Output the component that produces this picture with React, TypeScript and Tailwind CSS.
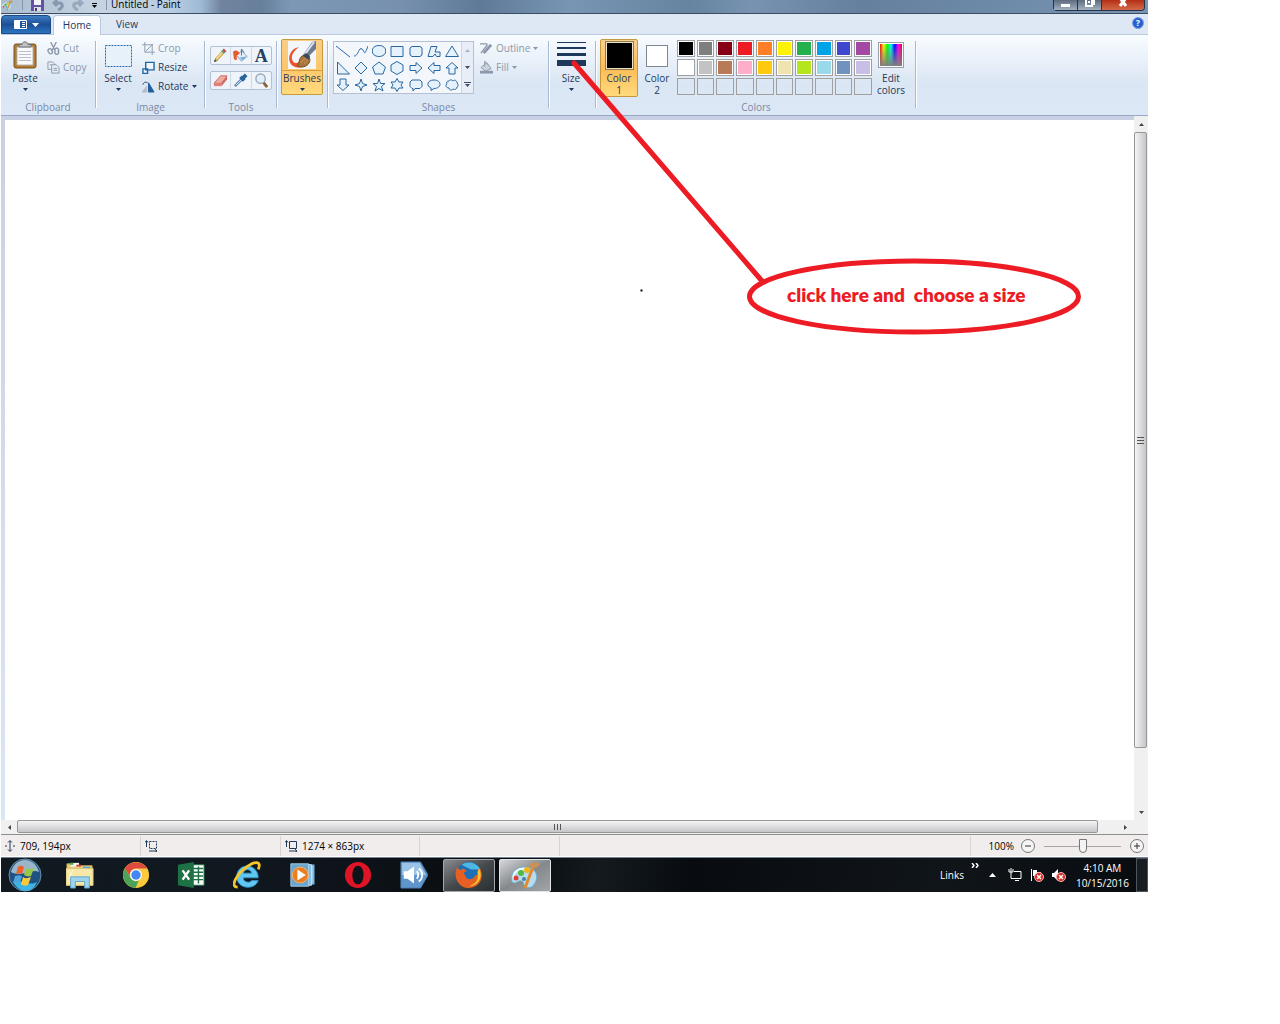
import type { ReactNode } from "react";
import { clsx } from "clsx";

const palette = [
  ["Black", "bg-black"],
  ["Gray", "bg-[#7f7f7f]"],
  ["Dark red", "bg-[#880015]"],
  ["Red", "bg-[#ed1c24]"],
  ["Orange", "bg-[#ff7f27]"],
  ["Yellow", "bg-[#fff200]"],
  ["Green", "bg-[#22b14c]"],
  ["Turquoise", "bg-[#00a2e8]"],
  ["Indigo", "bg-[#3f48cc]"],
  ["Purple", "bg-[#a349a4]"],
  ["White", "bg-white"],
  ["Light gray", "bg-[#c3c3c3]"],
  ["Brown", "bg-[#b97a57]"],
  ["Rose", "bg-[#ffaec9]"],
  ["Gold", "bg-[#ffc90e]"],
  ["Light yellow", "bg-[#efe4b0]"],
  ["Lime", "bg-[#b5e61d]"],
  ["Light turquoise", "bg-[#99d9ea]"],
  ["Blue-gray", "bg-[#7092be]"],
  ["Lavender", "bg-[#c8bfe7]"],
];

// Outlines drawn in a 14x14 box
const shapes = [
  ["Line", "M0 2 14 13"],
  ["Curve", "M0 12C4 13 5 2 8 5s2 8 6-3"],
  ["Oval", "M7 1.5c9 0 9 11 0 11S-2 1.5 7 1.5Z"],
  ["Rectangle", "M1 12.5V2.5H13V12.5Z"],
  ["Rounded rectangle", "M3 2.5H11L13 4V11L11 12.5H3L1 11V4Z"],
  ["Polygon", "M1 12.5 4 2.5H10L8 8H13V12.5H9.5L8 10 6 12.5Z"],
  ["Triangle", "M7 2 13.5 12.5H.5Z"],
  ["Right triangle", "M1.5 1V13H13.5Z"],
  ["Diamond", "M7 1 13 7 7 13 1 7Z"],
  ["Pentagon", "M7 1 13.5 6 11 13H3L.5 6Z"],
  ["Hexagon", "M7 .5 13 4V10L7 13.5 1 10V4Z"],
  ["Right arrow", "M1 4.5H7V1.5L13 7 7 12.5V9.5H1Z"],
  ["Left arrow", "M13 4.5H7V1.5L1 7 7 12.5V9.5H13Z"],
  ["Up arrow", "M4 13V7H1L7 1.5 13 7H10V13Z"],
  ["Down arrow", "M4 1V7H1L7 12.5 13 7H10V1Z"],
  ["Four-point star", "M7 1 8.5 5.5 13 7 8.5 8.5 7 13 5.5 8.5 1 7 5.5 5.5Z"],
  ["Five-point star", "M7 1 8.5 5.5H13L9.5 8.5 11 13 7 10.5 3 13 4.5 8.5 1 5.5H5.5Z"],
  ["Six-point star", "M7 .5 9 4H13L11 7 13 10H9L7 13.5 5 10H1L3 7 1 4H5Z"],
  ["Rounded callout", "M3 2H11L13 4V8.5L11 10.5H6L4 13V10.5H3L1 8.5V4Z"],
  ["Oval callout", "M7 2c8 0 8 8.5 0 8.5L4 12.5V10C-1 8 0 2 7 2Z"],
  ["Cloud callout", "M4 3c1-2 3-1 4 0 2-2 4 0 4 2 2 1 1 4 0 4 0 2-2 3-4 2-1 2-4 1-4-1-3 0-4-3-2-4-1-2 0-3 2-3Z"],
];

const statusCell = "flex items-center border-r border-[#d8d4d2] pl-1";

function DownArrow({ className }: { className?: string }) {
  return (
    <svg viewBox="0 0 5 3" className={clsx("h-[3px] w-[5px] shrink-0", className)} fill="currentColor" aria-hidden="true">
      <path d="M0 0H5L2.5 3Z" />
    </svg>
  );
}

interface GroupProps {
  label?: string;
  className: string;
  children: ReactNode;
}

function Group({ label, className, children }: GroupProps) {
  return (
    <>
      <section className={clsx("flex shrink-0 flex-col", className)} aria-label={label}>
        <div className="flex h-[62px] items-start">{children}</div>
        <div className="text-center leading-3 text-[#7b88a5]">{label}</div>
      </section>
      <span className="mt-[2px] h-[67px] w-[2px] shrink-0 border-r border-white bg-[#a9b9d1]" />
    </>
  );
}

interface RowButtonProps {
  label: string;
  icon: ReactNode;
  disabled?: boolean;
  arrow?: boolean;
}

function RowButton({ label, icon, disabled, arrow }: RowButtonProps) {
  return (
    <button
      type="button"
      disabled={disabled}
      className={clsx("flex h-[19px] items-center", disabled ? "text-[#8c98a9]" : "text-[#1e395b]")}
    >
      <svg viewBox="0 0 14 14" className="mr-[3px] size-[13px]" fill="none" stroke="currentColor" aria-hidden="true">
        {icon}
      </svg>
      {label}
      {arrow && <DownArrow className="ml-[3px]" />}
    </button>
  );
}

function PasteIcon() {
  return (
    <svg viewBox="0 0 24 28" className="h-7 w-6" aria-hidden="true">
      <rect x="1" y="3" width="22" height="24" rx="2" fill="#b27a35" stroke="#7d5220" />
      <path d="M4 6H20V24H4Z" fill="#f8fafc" stroke="#b9b2a4" />
      <path d="M6 10.5H18M6 13.5H18M6 16.5H18M6 19.5H18" stroke="#b6bfcb" />
      <path d="M6 6V3.5H9C9 0 15 0 15 3.5H18V6Z" fill="#bfc3c6" stroke="#6c7074" />
    </svg>
  );
}

function BrushIcon() {
  return (
    <svg viewBox="0 0 28 28" className="size-7" aria-hidden="true">
      <rect width="28" height="28" fill="#f3f6fa" />
      <path d="M28 0V8L19 17 15 14 24 1Z" fill="#6d7c94" />
      <path d="M26 1 17 13" stroke="#dfe6ee" strokeWidth="2" />
      <path d="M11 6C1 8-2 20 5 25c6 3 11 1 13-2l-6-3c-3 3-7 3-8-2-1-4 2-8 7-12Z" fill="#ea5429" />
      <path d="M9 25c3-1 1-7 5-10 5-2 10 2 7 7-2 4-8 5-12 3Z" fill="#a8763b" stroke="#7b4e1f" />
      <path d="M13 22C15 18 17 18 18 17M16 23C18 21 19 20 20 18" stroke="#cf9d59" fill="none" />
      <path d="M15 15 18 12 22 15 21 19Z" fill="#3f4858" />
    </svg>
  );
}

function PaletteIcon({ className }: { className: string }) {
  return (
    <svg viewBox="0 0 30 28" className={className} aria-hidden="true">
      <path d="M2 21C-1 11 8 5 16 6c10 1 13 9 9 16-3 6-9 6-11 2-1-2 0-4-3-4-3-1-5 4-9 1Z" fill="#b5dcef" stroke="#71aecd" />
      <path d="M4 18C2 11 9 7 15 8" fill="none" stroke="#f2fbff" strokeWidth="2" />
      <circle cx="6" cy="17" r="2.5" fill="#de4033" />
      <circle cx="11" cy="12" r="3" fill="#52b743" />
      <circle cx="17" cy="9" r="3" fill="#f2b51d" />
      <circle cx="14" cy="18" r="2" fill="#4381a8" />
      <path d="M15 27 23 6" stroke="#e28a2b" strokeWidth="3" />
      <path d="M20 6C19 1 24 0 30 3c-2 4-5 5-10 3Z" fill="#c89256" />
    </svg>
  );
}

function TitleBar() {
  return (
    <header className="flex h-[14px] items-start overflow-hidden border-b border-[#3c4d62] bg-[linear-gradient(to_right,#a9bdd1,#c6d4e2_100px,#b9cde2_170px,#9fbad6_200px,#71849f_220px,#667f9b_260px,#7d98b5_290px,#7690ad_400px,#5f7a98_480px,#7896b4_570px,#66839f_690px,#7793b1_750px,#64809e_860px,#7995b4)]">
      <div className="flex w-52 shrink-0 items-start">
        <PaletteIcon className="h-[11px] w-3" />
        <span className="ml-[9px] h-[10px] w-px bg-[#8797a9]" />
        <button type="button" aria-label="Save" className="ml-2">
          <svg viewBox="0 0 13 12" className="h-3 w-[13px]" aria-hidden="true">
            <path d="M0 0H13V11H0Z" fill="#6652a2" />
            <path d="M3 0H10V5H3Z" fill="#f4f5fa" />
            <path d="M3 7H10V11H3Z" fill="#dfe1e9" />
            <path d="M4 8H6V11H4Z" fill="#433a77" />
          </svg>
        </button>
        <button type="button" aria-label="Undo" disabled className="ml-2">
          <svg viewBox="0 0 12 11" className="h-[11px] w-3" fill="none" stroke="#8798af" strokeWidth="3" aria-hidden="true">
            <path d="M2 3H7C12 3 11 8 6 10M5 0 2 3 5 6" />
          </svg>
        </button>
        <button type="button" aria-label="Redo" disabled className="ml-2">
          <svg viewBox="0 0 12 11" className="h-[11px] w-3" fill="none" stroke="#98a8bd" strokeWidth="3" aria-hidden="true">
            <path d="M10 3H5C0 3 1 8 6 10M7 0 10 3 7 6" />
          </svg>
        </button>
        <button type="button" aria-label="Customize toolbar" className="mt-[3px] ml-2 flex flex-col items-center gap-px text-black">
          <span className="h-px w-[5px] bg-black" />
          <DownArrow />
        </button>
        <span className="mr-[4px] ml-[9px] h-[10px] w-px bg-[#8797a9]" />
        <h1 className="-mt-[3px] text-[10px] leading-[14px] text-black">Untitled - Paint</h1>
      </div>
      <div className="mr-[3px] ml-auto flex h-[11px] rounded-b border border-t-0 border-[#243346] text-white">
        <button type="button" aria-label="Minimize" className="flex h-[10px] w-6 items-center justify-center border-r border-[#243346] bg-linear-to-b from-[#5d6c7e] to-[#a3b1c1]">
          <span className="h-[3px] w-[9px] bg-white" />
        </button>
        <button type="button" aria-label="Restore" className="flex h-[10px] w-6 justify-center border-r border-[#243346] bg-linear-to-b from-[#5d6c7e] to-[#a3b1c1]">
          <svg viewBox="0 0 10 8" className="h-2 w-[10px]" fill="none" stroke="white" strokeWidth="2" aria-hidden="true">
            <path d="M1 0V6H7V0M9 0V5M3 2H5" />
          </svg>
        </button>
        <button type="button" aria-label="Close" className="flex h-[10px] w-[42px] justify-center rounded-br bg-linear-to-b from-[#b42d14] to-[#d4694a]">
          <svg viewBox="0 0 10 8" className="h-2 w-[10px]" fill="none" stroke="white" strokeWidth="3" aria-hidden="true">
            <path d="M2 -2 8 6M8 -2 2 6" />
          </svg>
        </button>
      </div>
    </header>
  );
}

function Tabs() {
  return (
    <nav className="flex h-[21px] items-end border-b border-[#bacbdf] bg-[#dee8f4] text-[#1e395b]" aria-label="Ribbon tabs">
      <button type="button" aria-label="Paint menu" className="flex h-[19px] w-[50px] items-center justify-center gap-[5px] rounded-t-sm border border-[#1b4b87] bg-linear-to-b from-[#3d7cc3] via-[#1d4f96] to-[#2b75c0] text-white">
        <svg viewBox="0 0 13 9" className="h-[9px] w-[13px]" fill="none" stroke="white" aria-hidden="true">
          <path d="M.5 .5H12.5V8.5H.5Z" />
          <path d="M1 1H6V8H1Z" fill="white" stroke="none" />
          <path d="M8 2.5H11M8 4.5H11M8 6.5H11" />
        </svg>
        <svg viewBox="0 0 7 4" className="h-1 w-[7px]" fill="white" aria-hidden="true">
          <path d="M0 0H7L3.5 4Z" />
        </svg>
      </button>
      <button type="button" className="-mb-px ml-[2px] h-5 w-12 rounded-t-sm border border-b-0 border-[#bacbdf] bg-[#fafcff]">
        Home
      </button>
      <button type="button" className="ml-1 h-[19px] w-11">View</button>
      <button type="button" aria-label="Help" className="mr-[4px] mb-[5px] ml-auto size-3 rounded-full border border-[#7ca0df] bg-[#2460cf] text-[9px] leading-[10px] font-bold text-white">
        ?
      </button>
    </nav>
  );
}

function ToolIcon({ name }: { name: string }) {
  return (
    <svg viewBox="0 0 16 16" className="size-[15px]" fill="none" aria-hidden="true">
      {name === "Pencil" && (
        <>
          <path d="M3 13 11 4" stroke="#b98d3c" strokeWidth="3.5" />
          <path d="M3.5 12 10.5 4.5" stroke="#f8dc83" strokeWidth="2" />
          <path d="M11 4 13 2" stroke="#c84c53" strokeWidth="4" />
          <path d="M10 5 11.5 3.5" stroke="#62a36d" strokeWidth="4" />
          <path d="M1 15 2 12 4 14Z" fill="#333" />
        </>
      )}
      {name === "Fill" && (
        <>
          <path d="M4 8 9 3 15 9 9 14Z" fill="#e6f0f8" stroke="#7c9cba" />
          <path d="M9 8V1L12 5" stroke="#51718f" />
          <path d="M0 4C4 1 6 4 7 6L4 8 4 13 1 12Z" fill="#e65b30" />
          <path d="M7 10 10 13 14 9Z" fill="#75abe0" />
        </>
      )}
      {name === "Eraser" && (
        <>
          <path d="M1 11 8 3H15L9 11Z" fill="#f0a9a1" stroke="#c8716b" />
          <path d="M1 11H9V14H1Z" fill="#e27e77" />
          <path d="M9 11 15 3V7L9 14Z" fill="#d16b65" />
        </>
      )}
      {name === "Pick color" && (
        <>
          <path d="M2 14 10 6" stroke="#5f86a9" strokeWidth="3" />
          <path d="M3 13 9 7" stroke="#dcebf6" />
          <path d="M8 4 12 8M10 6 14 2" stroke="#27659f" strokeWidth="4" />
        </>
      )}
      {name === "Magnifier" && (
        <>
          <path d="M10 10 14 15" stroke="#8b6035" strokeWidth="3" />
          <circle cx="7" cy="6" r="5" fill="#e2effa" stroke="#98a9ba" strokeWidth="1.5" />
        </>
      )}
    </svg>
  );
}

function ToolRow({ tools }: { tools: string[] }) {
  return (
    <div className="flex h-[19px] w-[62px] rounded-xs border border-[#b3c0d3] bg-[#eff4fa]">
      {tools.map((tool) => (
        <button
          key={tool}
          type="button"
          aria-label={tool}
          className="flex flex-1 items-center justify-center border-r border-[#d0dae7] last:border-r-0"
        >
          {tool === "Text" ? (
            <span className="font-['Liberation_Serif',serif] text-lg leading-4 font-bold text-[#223f64]">A</span>
          ) : (
            <ToolIcon name={tool} />
          )}
        </button>
      ))}
    </div>
  );
}

function Ribbon() {
  const tall = "flex flex-col items-center text-[#1e395b]";
  return (
    <div className="flex h-[81px] items-start overflow-hidden border-b border-[#97a9c4] bg-linear-to-b from-[#f8fcff] via-[#dbe6f4] via-60% to-[#dce8f6] pt-1">
      <Group label="Clipboard" className="w-[94px]">
        <button type="button" className={clsx(tall, "ml-[6px] w-9 pt-[2px]")}>
          <PasteIcon />
          <span className="mt-[3px] leading-3">Paste</span>
          <DownArrow className="mt-[4px]" />
        </button>
        <div className="ml-1 flex flex-col items-start">
          <RowButton label="Cut" disabled icon={<path d="M4 0 9 10M10 0 5 10M2 11a2 2 0 1 0 3-2 2 2 0 1 0-3 2M9 10a2 2 0 1 0 3 0 2 2 0 1 0-3 0" strokeWidth="1.5" />} />
          <RowButton label="Copy" disabled icon={<path d="M5 9H1V1H6L8 3V4M5 4H10L13 7V13H5ZM7 8H11M7 10H11M3 4H5" />} />
        </div>
      </Group>

      <Group label="Image" className="w-[107px]">
        <button type="button" className={clsx(tall, "ml-[3px] w-9 pt-[6px]")}>
          <svg viewBox="0 0 27 22" className="h-[22px] w-[27px]" aria-hidden="true">
            <rect x=".5" y=".5" width="26" height="21" fill="#e7f1fa" stroke="#236baa" strokeDasharray="2 1" />
          </svg>
          <span className="mt-[5px] leading-3">Select</span>
          <DownArrow className="mt-[4px]" />
        </button>
        <div className="ml-[6px] flex flex-col items-start">
          <RowButton label="Crop" disabled icon={<path d="M3 0V11H14M0 3H11V14M4 10 12 2" />} />
          <RowButton label="Resize" icon={<path d="M4 1.5H13V9.5H4ZM1 8.5H6V13.5H1Z" stroke="#1f67a4" strokeWidth="1.5" fill="#edf5fb" />} />
          <RowButton label="Rotate" arrow icon={<><path d="M7 3V13H13Z" fill="#205f9c" stroke="#205f9c" /><path d="M5 7V13H0Z" fill="#b5bdc7" stroke="#b5bdc7" /><path d="M1 5C2 2 4 2 6 3" /></>} />
        </div>
      </Group>

      <Group label="Tools" className="w-[70px]">
        <div className="ml-[4px] flex flex-col gap-[6px] pt-[7px]">
          <ToolRow tools={["Pencil", "Fill", "Text"]} />
          <ToolRow tools={["Eraser", "Pick color", "Magnifier"]} />
        </div>
      </Group>

      <Group className="w-[49px]">
        <button type="button" className={clsx(tall, "ml-[3px] h-14 w-[42px] rounded-xs border border-[#c49a3a] bg-linear-to-b from-[#f8cd88] via-[#fdc66c] to-[#ffda7c] pt-px")}>
          <BrushIcon />
          <span className="mt-px h-px w-full bg-[#d5a13c]" />
          <span className="mt-px leading-3">Brushes</span>
          <DownArrow className="mt-[4px]" />
        </button>
      </Group>

      <Group label="Shapes" className="w-[219px]">
        <div className="mt-[2px] ml-[4px] flex h-[53px] w-[141px] shrink-0 border border-[#b5c1d3] bg-[#f3f7fc]">
          <div className="grid flex-1 grid-cols-7 grid-rows-3">
            {shapes.map(([name, d]) => (
              <button key={name} type="button" aria-label={name} className="flex items-center justify-center">
                <svg viewBox="0 0 14 14" className="size-[14px]" fill={name === "Line" || name === "Curve" ? "none" : "#e5f1fb"} stroke="#2a67a0" aria-hidden="true">
                  <path d={d} />
                </svg>
              </button>
            ))}
          </div>
          <div className="flex w-3 flex-col border-l border-[#cdd6e3] bg-[#e7eef7] text-[#3d4d68]">
            <button type="button" aria-label="Scroll shapes up" className="flex flex-1 items-center justify-center text-[#a9b4c6]">
              <DownArrow className="rotate-180" />
            </button>
            <button type="button" aria-label="Scroll shapes down" className="flex flex-1 items-center justify-center">
              <DownArrow />
            </button>
            <button type="button" aria-label="More shapes" className="flex flex-1 flex-col items-center justify-center gap-px">
              <span className="h-px w-[7px] bg-current" />
              <DownArrow />
            </button>
          </div>
        </div>
        <div className="ml-[6px] flex flex-col items-start">
          <RowButton label="Outline" arrow disabled icon={<><path d="M0 2H8M1 12 8 3" strokeWidth="1.5" /><path d="M4 12 12 3" strokeWidth="3" /></>} />
          <RowButton label="Fill" arrow disabled icon={<><path d="M1 7 7 2 12 8 6 11Z" fill="#c9d2df" /><path d="M5 6V0L9 4" /><path d="M0 12H14" strokeWidth="3" /></>} />
        </div>
      </Group>

      <Group className="w-[45px]">
        <button type="button" className={clsx(tall, "ml-[3px] w-9 pt-[3px]")}>
          <span className="h-px w-[29px] bg-[#1e395b]" />
          <span className="mt-1 h-[2px] w-[29px] bg-[#1e395b]" />
          <span className="mt-1 h-[3px] w-[29px] bg-[#1e395b]" />
          <span className="mt-1 h-[6px] w-[29px] bg-[#1e395b]" />
          <span className="mt-[6px] leading-3">Size</span>
          <DownArrow className="mt-[4px]" />
        </button>
      </Group>

      <Group label="Colors" className="w-[318px]">
        <button type="button" className={clsx(tall, "ml-[3px] h-[58px] w-[38px] rounded-xs border border-[#c49a3a] bg-linear-to-b from-[#f8cf90] via-[#fdbc57] to-[#ffda7c] pt-px")}>
          <span className="size-[29px] border border-[#8c7a53] bg-black outline -outline-offset-2 outline-[#efe2c4]" />
          <span className="mt-[2px] leading-3">Color<br />1</span>
        </button>
        <button type="button" className={clsx(tall, "w-[38px] pt-[6px]")}>
          <span className="size-[22px] border border-[#7e8796] bg-white" />
          <span className="mt-[5px] leading-3">Color<br />2</span>
        </button>
        <div className="mt-px ml-px grid w-[195px] grid-cols-10 gap-x-[2px] gap-y-[2px]">
          {palette.map(([name, color]) => (
            <button key={name} type="button" aria-label={name} className="h-[17px] border border-[#a0a0a0] bg-white p-px">
              <span className={clsx("block h-full", color)} />
            </button>
          ))}
          {Array.from({ length: 10 }, (_, i) => (
            <button key={i} type="button" aria-label={`Custom color ${i + 1}`} className="h-[17px] border border-[#a0a0a0]" />
          ))}
        </div>
        <button type="button" className={clsx(tall, "ml-px w-9 pt-[3px]")}>
          <span className="size-[26px] border border-[#9aa0a8] bg-white p-px">
            <span className="block h-full bg-[linear-gradient(to_bottom,transparent,#808080),linear-gradient(to_right,#f00,#ff0,#0f0,#0ff,#00f,#f0f,#f00)]" />
          </span>
          <span className="mt-[4px] leading-3">Edit<br />colors</span>
        </button>
      </Group>
    </div>
  );
}

function Workspace() {
  return (
    <main className="flex flex-1 flex-col bg-[#f1f0f1]">
      <div className="flex flex-1">
        <div className="flex flex-1 bg-linear-to-b from-[#c8d1e3] to-[#dbe6f4] pt-[4px] pl-[4px]">
          <div className="flex-1 bg-white" />
        </div>
        <div className="flex w-[14px] flex-col text-[#444]">
          <button type="button" aria-label="Scroll up" className="flex h-4 w-full items-center justify-center">
            <DownArrow className="rotate-180" />
          </button>
          <div className="flex w-[13px] flex-[616] flex-col items-center justify-center gap-px rounded-xs border border-[#979797] bg-linear-to-r from-[#f4f4f5] to-[#c6c6ca]">
            <span className="h-px w-[7px] bg-[#555]" />
            <span className="mt-px h-px w-[7px] bg-[#555]" />
            <span className="mt-px h-px w-[7px] bg-[#555]" />
          </div>
          <div className="flex-[56]" />
          <button type="button" aria-label="Scroll down" className="flex h-4 w-full items-center justify-center">
            <DownArrow />
          </button>
        </div>
      </div>
      <div className="flex h-[14px] items-start pr-[15px] text-[#444]">
        <button type="button" aria-label="Scroll left" className="flex h-full w-4 items-center justify-center">
          <DownArrow className="rotate-90" />
        </button>
        <div className="flex h-[13px] flex-[1081] items-center justify-center gap-[2px] rounded-xs border border-[#979797] bg-linear-to-b from-[#f4f4f5] to-[#c6c6ca]">
          <span className="h-[6px] w-px bg-[#555]" />
          <span className="h-[6px] w-px bg-[#555]" />
          <span className="h-[6px] w-px bg-[#555]" />
        </div>
        <div className="flex-[19]" />
        <button type="button" aria-label="Scroll right" className="flex h-full w-4 items-center justify-center">
          <DownArrow className="-rotate-90" />
        </button>
      </div>
    </main>
  );
}

function StatusBar() {
  return (
    <div className="flex h-[23px] border-t border-b border-t-[#8e8e8e] border-b-white bg-[#f0edec] pt-px text-black">
      <div className={clsx(statusCell, "w-[140px]")}>
        <svg viewBox="0 0 10 12" className="mr-[5px] h-3 w-[10px]" fill="none" stroke="#1e395b" aria-hidden="true">
          <path d="M5 1V11M3 2.5 5 .5 7 2.5M3 9.5 5 11.5 7 9.5M0 6H2M8 6H10" />
        </svg>
        709, 194px
      </div>
      <div className={clsx(statusCell, "w-[140px]")}>
        <svg viewBox="0 0 13 12" className="h-3 w-[13px]" fill="none" stroke="#1e395b" aria-hidden="true">
          <path d="M1.5 1V7M0 2.5 1.5 .5 3 2.5M4 11H12M10 9 12 11 10 12.5" />
          <rect x="4.5" y="1.5" width="7" height="7" strokeDasharray="2 1" />
        </svg>
      </div>
      <div className={clsx(statusCell, "w-[139px]")}>
        <svg viewBox="0 0 13 12" className="mr-1 h-3 w-[13px]" fill="none" stroke="#1e395b" aria-hidden="true">
          <path d="M1.5 1V7M0 2.5 1.5 .5 3 2.5M4 11H12M10 9 12 11 10 12.5M4.5 1.5H11.5V8.5H4.5Z" />
        </svg>
        1274 × 863px
      </div>
      <div className={clsx(statusCell, "w-[140px]")} />
      <div className={clsx(statusCell, "flex-1")} />
      <label htmlFor="zoom" className="flex items-center pl-[18px]">100%</label>
      <button type="button" aria-label="Zoom out" className="ml-[7px]">
        <svg viewBox="0 0 14 14" className="size-[14px]" fill="#f5f5f5" stroke="#777" aria-hidden="true">
          <circle cx="7" cy="7" r="6.5" />
          <path d="M4 7H10" stroke="#333" />
        </svg>
      </button>
      <input
        id="zoom"
        type="range"
        defaultValue="50"
        className="mx-[9px] w-[77px] appearance-none bg-[linear-gradient(#a5a5a5,#a5a5a5)] bg-[length:100%_1px] bg-center bg-no-repeat [&::-webkit-slider-thumb]:h-[14px] [&::-webkit-slider-thumb]:w-2 [&::-webkit-slider-thumb]:appearance-none [&::-webkit-slider-thumb]:rounded-b-sm [&::-webkit-slider-thumb]:border [&::-webkit-slider-thumb]:border-[#777] [&::-webkit-slider-thumb]:bg-[#f4f4f4]"
      />
      <button type="button" aria-label="Zoom in" className="mr-[4px]">
        <svg viewBox="0 0 14 14" className="size-[14px]" fill="#f5f5f5" stroke="#777" aria-hidden="true">
          <circle cx="7" cy="7" r="6.5" />
          <path d="M4 7H10M7 4V10" stroke="#333" />
        </svg>
      </button>
    </div>
  );
}

const apps = [
  {
    name: "Explorer",
    icon: (
      <>
        <path d="M1 3H12L14 5H28V26H1Z" fill="#e9cf7d" stroke="#c2a04b" />
        <path d="M5 2H14V6H5Z" fill="#f4f7f4" />
        <path d="M4 2H8V4H4Z" fill="#4ba849" />
        <path d="M11 4H16V6H11Z" fill="#cf4232" />
        <path d="M18 6H26V9H18Z" fill="#5aa7df" />
        <path d="M0 8H29V26H0Z" fill="#f8e8a7" stroke="#dbc276" />
        <path d="M2 10 12 22M8 9 3 19" stroke="#fff8d8" />
        <path d="M5 29V17H25V29H20V22H10V29Z" fill="#9dd3ec" stroke="#5ba4cc" />
      </>
    ),
  },
  {
    name: "Chrome",
    icon: (
      <>
        <circle cx="15" cy="15" r="14" fill="#fbc93c" />
        <path d="M3 8A14 14 0 0 1 27 8H15A6.5 6.5 0 0 0 9 17.5Z" fill="#dd4b3e" />
        <path d="M3 8 9.500 18.500A6.500 6.500 0 0 0 18 21L14.500 29A14 14 0 0 1 3 8Z" fill="#4ba35a" />
        <circle cx="15" cy="15" r="6.5" fill="#f3f6fa" />
        <circle cx="15" cy="15" r="5" fill="#4387f2" />
      </>
    ),
  },
  {
    name: "Excel",
    icon: (
      <>
        <path d="M15 4H29V26H15Z" fill="#f7faf8" stroke="#1e7145" />
        <path d="M17 8H28M17 12H28M17 16H28M17 20H28M23 6V24" stroke="#1e7145" strokeWidth="1.5" />
        <path d="M1 4 18 1V29L1 26Z" fill="#1e7145" />
        <path d="M6 10 13 20M13 10 6 20" stroke="white" strokeWidth="2.5" />
      </>
    ),
  },
  {
    name: "Internet Explorer",
    icon: (
      <>
        <path d="M27 18H11C11 23 18 24 20 21H27C23 32 4 30 4 17 4 1 27 2 27 18ZM11 13H20C19 8 12 8 11 13Z" fill="#62c6f2" stroke="#2c96cf" fillRule="evenodd" />
        <path d="M5 28C-4 28 4 14 15 6 24 0 31 0 27 9" fill="none" stroke="#f5c62b" strokeWidth="3" />
      </>
    ),
  },
  {
    name: "Media Player",
    icon: (
      <>
        <path d="M8 4H27V25H8Z" fill="#9bc8e5" stroke="#4482ad" />
        <path d="M6 4H24V26H6Z" fill="#82b8da" stroke="#cbe6f6" />
        <path d="M2 3H21V27H2Z" fill="#69a5cf" stroke="#a9d2ec" />
        <circle cx="12" cy="15" r="8.5" fill="#ec7c20" stroke="#f6b569" />
        <path d="M9 9V21L18 15Z" fill="white" />
      </>
    ),
  },
  {
    name: "Opera",
    icon: <path d="M15 1A14 14 0 1 1 15 29 14 14 0 1 1 15 1ZM15 5C7 5 7 25 15 25S23 5 15 5Z" fill="#df1426" fillRule="evenodd" />,
  },
  {
    name: "Sound",
    icon: (
      <>
        <path d="M1 1H22L30 15 22 29H1Z" fill="#5f94cc" stroke="#4c7db3" />
        <path d="M2 2H21L28 15H2Z" fill="#9ac3e7" />
        <path d="M4 11H8L15 6V24L8 19H4Z" fill="white" />
        <path d="M18 11C20 13 20 17 18 19M20 8C25 11 25 19 20 22" fill="none" stroke="white" strokeWidth="2" />
      </>
    ),
  },
  {
    name: "Firefox",
    icon: (
      <>
        <circle cx="15" cy="14" r="13" fill="#1d6fb4" />
        <path d="M7 4C14-1 24 2 27 9L17 9Z" fill="#4db8e4" />
        <path d="M27 8C33 23 21 30 13 29 3 28-2 17 2 7L6 10C8 7 10 8 13 11 9 11 9 14 11 15 11 21 20 21 22 15 25 16 26 12 24 9Z" fill="#e66023" />
        <path d="M26 8C31 19 23 27 15 27 22 25 26 20 24 12Z" fill="#f9c52d" />
      </>
    ),
  },
];

function ErrorBadge() {
  return (
    <>
      <circle cx="9" cy="9" r="4.5" fill="#d52b25" stroke="#f3b3ae" strokeWidth="1" />
      <path d="M7 7 11 11M11 7 7 11" stroke="white" strokeWidth="1.5" />
    </>
  );
}

function Taskbar() {
  return (
    <footer className="flex h-[35px] items-center border-t border-[#748296] bg-[linear-gradient(100deg,#101820,#11181f_20%,#080c10_45%,#141a1e_52%,#080c10_60%,#10151a_82%,#080c10)] text-white">
      <button type="button" aria-label="Start" className="ml-[7px] w-[46px] shrink-0">
        <svg viewBox="0 0 34 34" className="size-[34px]" aria-hidden="true">
          <circle cx="17" cy="17" r="16" fill="#1f5280" stroke="#6c8ea8" />
          <path d="M3 14C7-2 27-2 31 14 23 10 14 20 3 14Z" fill="#9bb6c8" />
          <path d="M5 24C12 36 24 36 29 24 20 29 14 20 5 24Z" fill="#3db4e4" />
          <path d="M10 9C12 7 14 8 16 9L14 16C12 15 10 15 8 16Z" fill="#ef6128" />
          <path d="M18 10C21 12 23 11 26 10L23 18C20 19 18 18 16 17Z" fill="#96c947" />
          <path d="M7 18C10 17 12 17 14 18L12 25C10 24 7 24 5 25Z" fill="#4ca6dd" />
          <path d="M15 19C18 21 20 20 23 19L20 27C18 28 15 28 13 26Z" fill="#fac83a" />
        </svg>
      </button>
      <div className="flex w-[497px] shrink-0 justify-between">
        {apps.map((app) => (
          <button
            key={app.name}
            type="button"
            aria-label={app.name}
            className={clsx(
              "flex h-[33px] w-[52px] items-center justify-center rounded-xs",
              app.name === "Firefox" && "border border-[#a5a8aa] bg-linear-to-br from-[#8a8c90] via-[#45494c] to-[#292f32]",
            )}
          >
            <svg viewBox="0 0 30 30" className="size-7" aria-hidden="true">
              {app.icon}
            </svg>
          </button>
        ))}
        <button type="button" aria-label="Paint" className="flex h-[33px] w-[52px] items-center justify-center rounded-xs border border-[#e2e3e4] bg-linear-to-br from-[#d6d7da] via-[#85898c] to-[#a2a4a6]">
          <PaletteIcon className="h-7 w-[30px]" />
        </button>
      </div>
      <span className="ml-auto">Links</span>
      <button type="button" aria-label="More links" className="mb-5 ml-[7px]">
        <svg viewBox="0 0 8 5" className="h-[5px] w-2" fill="none" stroke="white" strokeWidth="1.5" aria-hidden="true">
          <path d="M1 0 3 2.5 1 5M5 0 7 2.5 5 5" />
        </svg>
      </button>
      <button type="button" aria-label="Show hidden icons" className="ml-[10px]">
        <svg viewBox="0 0 7 4" className="h-1 w-[7px]" fill="white" aria-hidden="true">
          <path d="M0 4 3.5 0 7 4Z" />
        </svg>
      </button>
      <div className="ml-3 flex gap-2">
        <svg viewBox="0 0 14 14" className="size-[14px]" fill="none" stroke="white" aria-hidden="true">
          <path d="M6 3.5H13V10.5H3V7M1 1V4H5V1M3 0V7M7 12.5H11" />
        </svg>
        <svg viewBox="0 0 14 14" className="size-[14px]" fill="white" aria-hidden="true">
          <path d="M1 1H2V13H1ZM3 2H7V4H11V8H3Z" />
          <ErrorBadge />
        </svg>
        <svg viewBox="0 0 14 14" className="size-[14px]" fill="white" aria-hidden="true">
          <path d="M0 5H2L6 1V13L2 9H0Z" />
          <ErrorBadge />
        </svg>
      </div>
      <time className="ml-[10px] pt-[2px] text-center leading-[15px]" dateTime="2016-10-15T04:10">
        4:10 AM
        <br />
        10/15/2016
      </time>
      <button type="button" aria-label="Show desktop" className="ml-[7px] h-[34px] w-3 border border-[#4e555b] bg-[#171d21]" />
    </footer>
  );
}

function Annotation() {
  return (
    <div className="pointer-events-none absolute top-0 left-0 text-[#ed1c24]">
      <svg viewBox="0 0 1090 340" className="h-[340px] w-[1090px]" fill="none" stroke="currentColor" strokeWidth="5" aria-hidden="true">
        <path d="M574 63 762 281" strokeLinecap="round" />
        <ellipse cx="914" cy="296.5" rx="164.5" ry="35.5" />
        <path d="M640.5 290.500H642.5" stroke="black" strokeWidth="2" />
      </svg>
      <p className="absolute top-[283px] left-[787px] font-['Lato',sans-serif] text-[19px] leading-6 font-extrabold whitespace-pre">
        click here and  choose a size
      </p>
    </div>
  );
}

export default function App() {
  return (
    <div className="relative flex min-h-screen flex-col bg-white pr-[132px] pb-[132px] pl-px font-['Open_Sans','Noto_Sans',sans-serif] text-[10px]">
      <TitleBar />
      <Tabs />
      <Ribbon />
      <Workspace />
      <StatusBar />
      <Taskbar />
      <Annotation />
    </div>
  );
}
